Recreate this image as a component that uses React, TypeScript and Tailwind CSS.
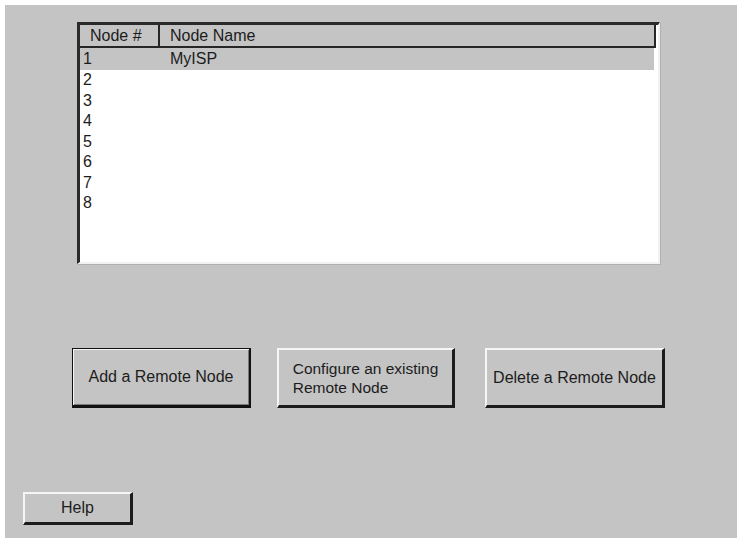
const nodes = [
  { id: 1, name: 'MyISP' },
  { id: 2, name: '' },
  { id: 3, name: '' },
  { id: 4, name: '' },
  { id: 5, name: '' },
  { id: 6, name: '' },
  { id: 7, name: '' },
  { id: 8, name: '' },
]

const selectedId = 1

function RaisedButton({
  children,
  isDefault = false,
  className = '',
}: {
  children: React.ReactNode
  isDefault?: boolean
  className?: string
}) {
  return (
    <button
      type="button"
      className={
        isDefault
          ? `flex items-center justify-center bg-[#c4c4c4] text-[#1c1c1c] border border-[#111] border-b-[3px] border-r-[2px] shadow-[inset_1px_1px_0_#f4f4f4,inset_-1px_-1px_0_#7a7a7a] ${className}`
          : `flex items-center justify-center bg-[#c4c4c4] text-[#1c1c1c] border-t-2 border-l-2 border-t-[#f6f6f6] border-l-[#f6f6f6] border-b-[3px] border-r-[3px] border-b-[#1c1c1c] border-r-[#1c1c1c] ${className}`
      }
    >
      {children}
    </button>
  )
}

export default function App() {
  return (
    <div className="w-[740px] h-[545px] bg-white p-[5px] font-['Liberation_Sans',Arial,sans-serif] text-[16px] leading-none">
      <div className="w-[732px] h-[533px] bg-[#c4c4c4] flex flex-col">
        {/* node list */}
        <div className="ml-[72px] mt-[17px] w-[583px] h-[242px] flex flex-col bg-white border-l-[3px] border-t-[3px] border-l-[#2a2a2a] border-t-[#2a2a2a] border-r-2 border-b-2 border-r-[#f2f2f2] border-b-[#f2f2f2] shadow-[1px_1px_0_#b0b0b0]">
          <div className="flex h-[23px] mr-[2px] bg-[#c4c4c4] border-b-2 border-r-2 border-[#262626] text-[#1c1c1c]">
            <div className="w-[80px] pl-[10px] flex items-center border-r-2 border-[#262626]">Node #</div>
            <div className="flex-1 pl-[10px] flex items-center">Node Name</div>
          </div>
          <div className="flex flex-col">
            {nodes.map((node) => (
              <div
                key={node.id}
                className={`flex h-[20.5px] items-center mr-[4px] text-[#1c1c1c] ${
                  node.id === selectedId ? 'bg-[#c4c4c4] h-[22px]' : ''
                }`}
              >
                <span className="w-[90px] pl-[3px]">{node.id}</span>
                <span>{node.name}</span>
              </div>
            ))}
          </div>
        </div>

        {/* actions */}
        <div className="flex mt-[84px] ml-[67px] gap-[26px]">
          <RaisedButton isDefault className="w-[179px] h-[60px]">
            Add a Remote Node
          </RaisedButton>
          <RaisedButton className="w-[178px] h-[60px] mr-[4px]">
            <span className="text-left text-[15.5px] leading-[19px]">
              Configure an existing
              <br />
              Remote Node
            </span>
          </RaisedButton>
          <RaisedButton className="w-[180px] h-[60px]">Delete a Remote Node</RaisedButton>
        </div>

        <div className="mt-[84px] ml-[18px]">
          <RaisedButton className="w-[110px] h-[33px]">Help</RaisedButton>
        </div>
      </div>
    </div>
  )
}
